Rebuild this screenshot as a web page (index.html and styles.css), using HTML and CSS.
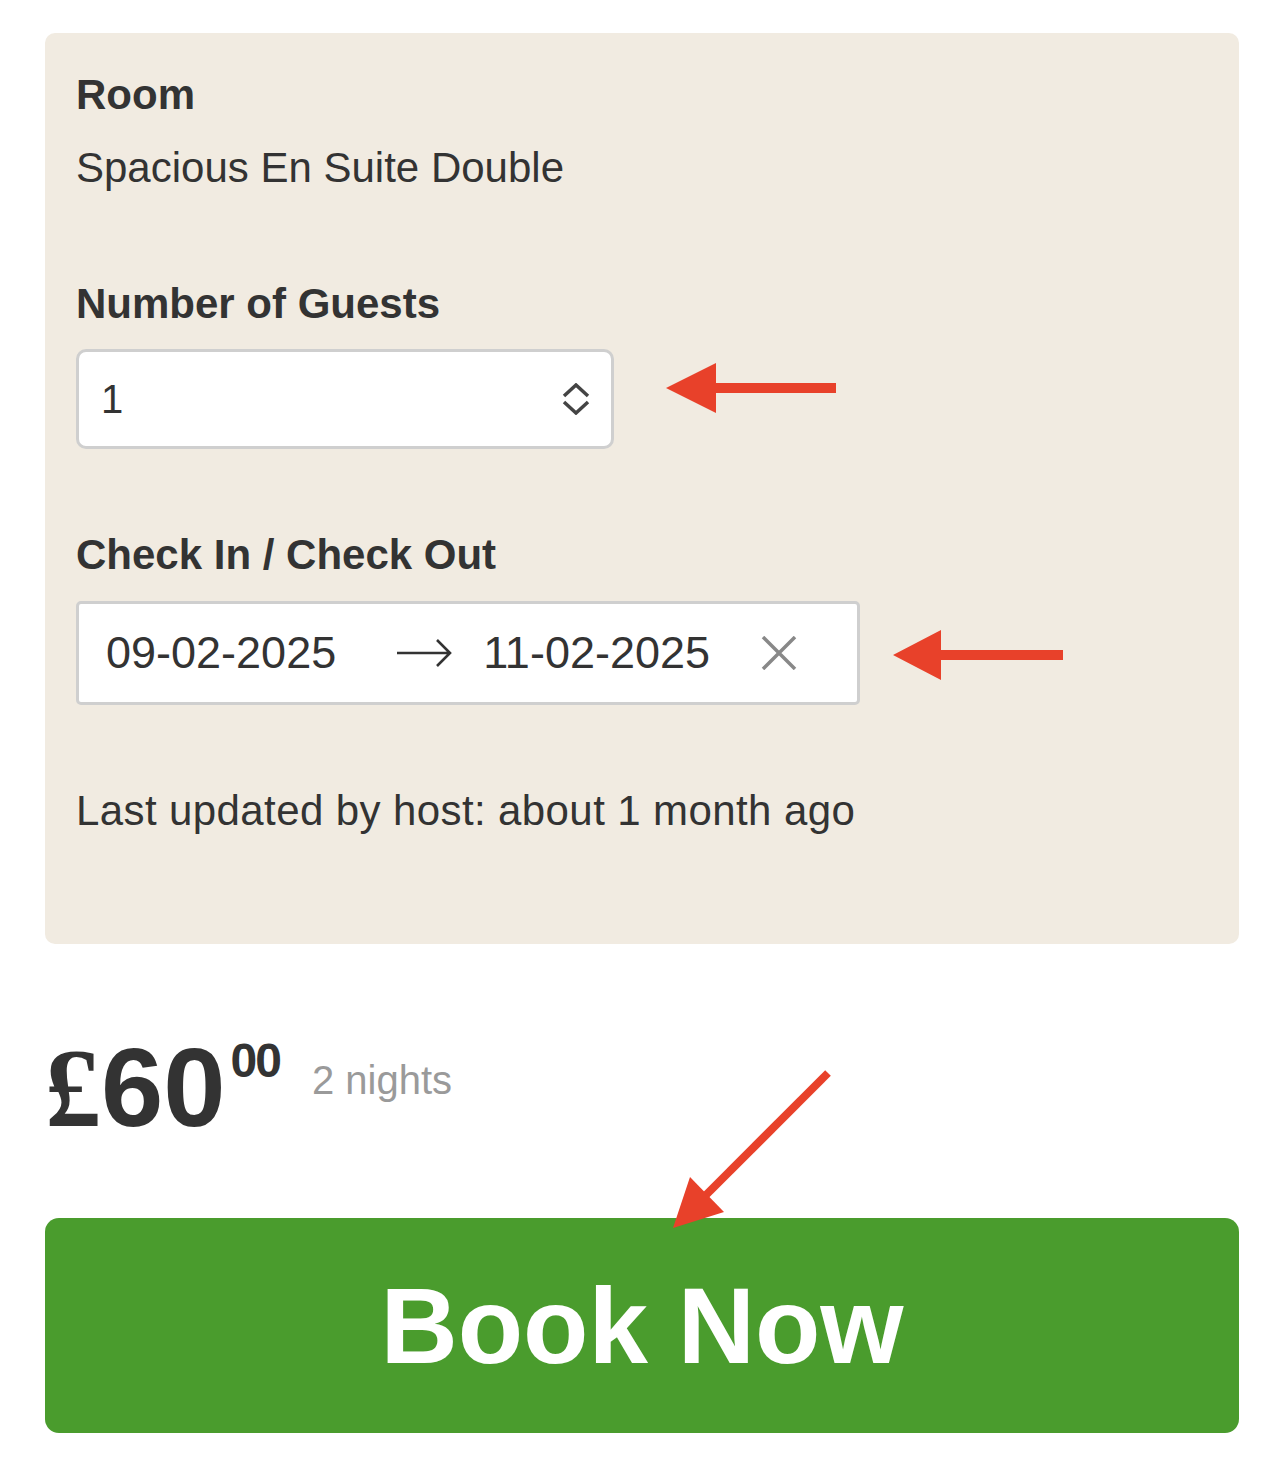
FILE: index.html
```html
<!DOCTYPE html>
<html>
<head>
<meta charset="utf-8">
<link rel="stylesheet" href="styles.css">
</head>
<body>
<div class="page">
  <section class="card">
    <div class="field">
      <div class="label">Room</div>
      <div class="value">Spacious En Suite Double</div>
    </div>
    <div class="field guests">
      <div class="label">Number of Guests</div>
      <div class="row">
        <div class="select">
          <span>1</span>
          <svg class="chev" width="30" height="32" viewBox="0 0 30 32"><path d="M3 13 L15 2 L27 13 M3 19 L15 30 L27 19" fill="none" stroke="#444" stroke-width="3.5"/></svg>
        </div>
        <svg class="arrow arrow1" width="170" height="50" viewBox="0 0 170 50"><polygon points="0,25 50,0 50,20 170,20 170,30 50,30 50,50" fill="#e8412a"/></svg>
      </div>
    </div>
    <div class="field dates">
      <div class="label">Check In / Check Out</div>
      <div class="row">
        <div class="daterange">
          <span class="date">09-02-2025</span>
          <svg class="to" width="56" height="30" viewBox="0 0 56 30"><path d="M1 15 H53 M41 2 L54 15 L41 28" fill="none" stroke="#333" stroke-width="2.6"/></svg>
          <span class="date">11-02-2025</span>
          <svg class="clear" width="36" height="34" viewBox="0 0 36 34"><path d="M2 1 L34 33 M34 1 L2 33" fill="none" stroke="#888" stroke-width="3.5"/></svg>
        </div>
        <svg class="arrow arrow2" width="170" height="50" viewBox="0 0 170 50"><polygon points="0,25 48,0 48,20 170,20 170,30 48,30 48,50" fill="#e8412a"/></svg>
      </div>
    </div>
    <p class="updated">Last updated by host: about 1 month ago</p>
  </section>
  <div class="price">
    <span class="amount"><span class="pound">£</span>60</span><sup class="cents">00</sup>
    <span class="nights">2 nights</span>
    <svg class="diag" width="180" height="170" viewBox="0 0 180 170"><path d="M168 8 L45 131" stroke="#e8412a" stroke-width="8" fill="none"/><polygon points="13,163 30,112 64,147" fill="#e8412a"/></svg>
  </div>
  <button class="book">Book Now</button>
</div>
</body>
</html>
```
FILE: styles.css
```css
html, body {
  margin: 0;
  padding: 0;
  background: #ffffff;
}
body {
  font-family: "Liberation Sans", Arial, sans-serif;
  color: #333333;
}
.page {
  padding: 33px 45px 0 45px;
}
.card {
  background: #f1ebe1;
  border-radius: 10px;
  padding: 38px 31px 0 31px;
  height: 911px;
  box-sizing: border-box;
}
.label {
  font-weight: bold;
  font-size: 42px;
  line-height: 48px;
  color: #333;
}
.value {
  font-size: 42px;
  line-height: 48px;
  margin-top: 25px;
}
.guests {
  margin-top: 88px;
}
.row {
  display: flex;
  align-items: center;
}
.guests .row {
  margin-top: 21px;
}
.select {
  width: 538px;
  height: 100px;
  box-sizing: border-box;
  border: 3px solid #cfcfcf;
  border-radius: 10px;
  background: #fff;
  display: flex;
  align-items: center;
  justify-content: space-between;
  padding: 0 20px 0 22px;
  font-size: 40px;
}
.arrow {
  margin-left: 52px;
}
.arrow1 {
  margin-bottom: 22px;
}
.dates {
  margin-top: 82px;
}
.dates .row {
  margin-top: 22px;
}
.daterange {
  width: 784px;
  height: 104px;
  box-sizing: border-box;
  border: 3px solid #cfcfcf;
  border-radius: 5px;
  background: #fff;
  display: flex;
  align-items: center;
  padding: 0 0 0 27px;
  font-size: 45px;
  color: #333;
}
.to {
  margin: 0 31px 0 60px;
}
.clear {
  margin-left: 51px;
}
.arrow2 {
  margin-left: 33px;
  margin-top: 4px;
}
.updated {
  margin: 82px 0 0 0;
  font-size: 42px;
  line-height: 48px;
  letter-spacing: 0.4px;
}
.price {
  position: relative;
  display: flex;
  align-items: flex-start;
  height: 274px;
  padding-top: 94px;
  box-sizing: border-box;
}
.amount {
  font-size: 112px;
  font-weight: bold;
  line-height: 100px;
  color: #333;
}
.pound {
  font-family: "Liberation Serif", serif;
}
.cents {
  font-size: 48px;
  font-weight: bold;
  line-height: 46px;
  margin-left: 5px;
  vertical-align: top;
  letter-spacing: -2px;
}
.nights {
  font-size: 40px;
  color: #9a9a9a;
  margin-left: 32px;
  margin-top: 20px;
}
.diag {
  position: absolute;
  left: 615px;
  top: 121px;
}
.book {
  display: block;
  width: 100%;
  height: 215px;
  border: none;
  border-radius: 14px;
  background: #4a9c2d;
  color: #fff;
  font-family: "Liberation Sans", Arial, sans-serif;
  font-weight: bold;
  font-size: 107px;
  padding: 0;
}
```
